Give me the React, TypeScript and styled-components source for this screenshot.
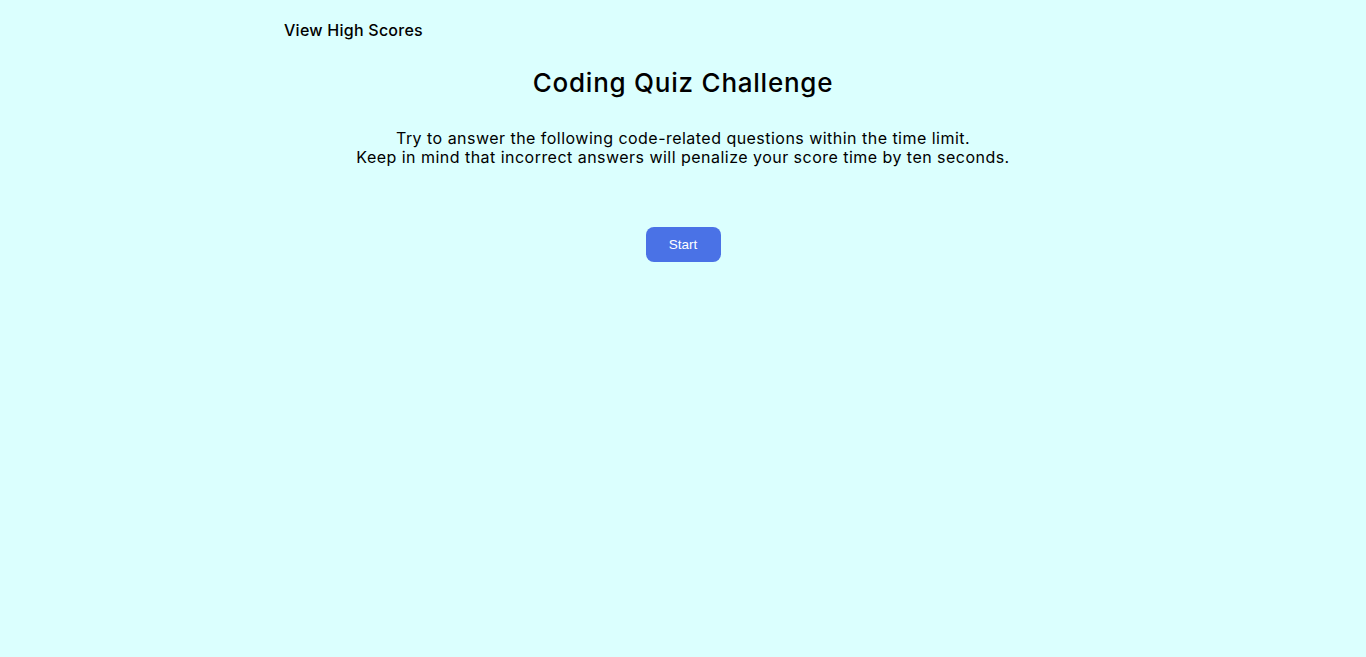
import React from "react";
import styled, { createGlobalStyle } from "styled-components";

const Global = createGlobalStyle`
  html, body { margin: 0; padding: 0; background: #dbfffe; }
  body { font-family: Inter, "Noto Sans", sans-serif; color: #000; }
`;

const Page = styled.div`
  min-height: 657px;
  background: #dbfffe;
`;

const Container = styled.div`
  width: 800px;
  margin: 0 auto;
  display: flex;
  flex-direction: column;
`;

const Header = styled.header`
  display: flex;
  align-items: center;
  height: 60px;
  padding-left: 1px;
`;

const HighScores = styled.a`
  font-size: 16px;
  font-weight: 500;
  letter-spacing: 0.25px;
  color: #000;
  text-decoration: none;
  cursor: pointer;
`;

const Main = styled.main`
  display: flex;
  flex-direction: column;
  align-items: center;
  text-align: center;
`;

const Title = styled.h1`
  margin: 4px 0 0;
  font-size: 26px;
  font-weight: 500;
  letter-spacing: 0.76px;
  line-height: 38px;
`;

const Intro = styled.div`
  margin-top: 27px;
  width: 1000px;
  display: flex;
  flex-direction: column;
  align-items: center;
`;

const IntroLine = styled.span`
  display: block;
  font-size: 16px;
  letter-spacing: 0.47px;
  line-height: 19px;
  height: 19px;
`;

const StartButton = styled.button`
  margin-top: 60px;
  width: 75px;
  height: 35px;
  border: none;
  border-radius: 8px;
  background: #4a72e6;
  color: #fff;
  font-family: "Liberation Sans", Arial, sans-serif;
  font-size: 13.5px;
  cursor: pointer;
`;

export default function App() {
  return (
    <Page>
      <Global />
      <Container>
        <Header>
          <HighScores>View High Scores</HighScores>
        </Header>
        <Main>
          <Title>Coding Quiz Challenge</Title>
          <Intro>
            <IntroLine>Try to answer the following code-related questions within the time limit.</IntroLine>
            <IntroLine>Keep in mind that incorrect answers will penalize your score time by ten seconds.</IntroLine>
          </Intro>
          <StartButton>Start</StartButton>
        </Main>
      </Container>
    </Page>
  );
}
